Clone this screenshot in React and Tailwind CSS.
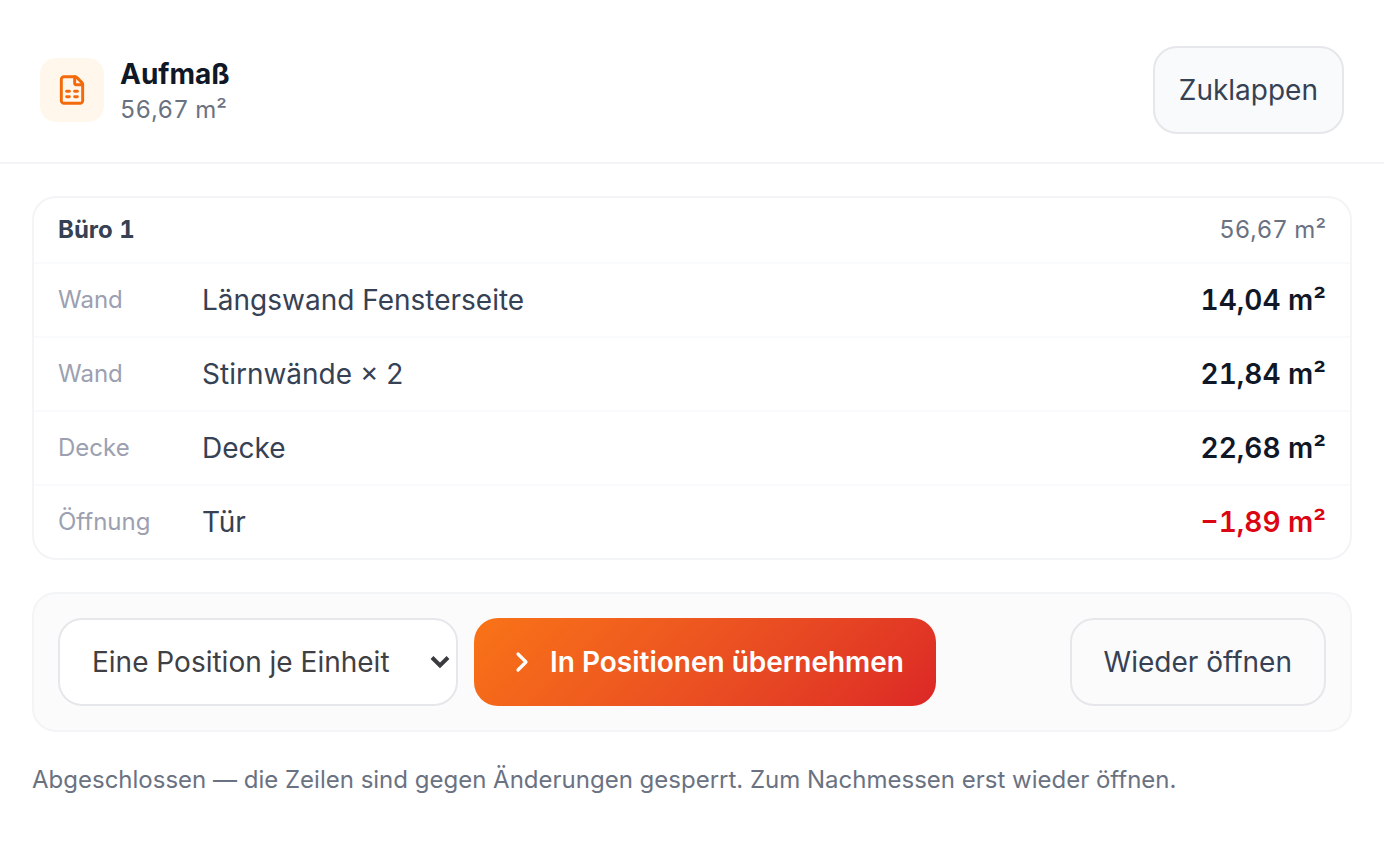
import { ChevronRight, FileSpreadsheet } from "lucide-react";

const rows = [
  { kind: "Wand", name: "Längswand Fensterseite", area: "14,04 m²" },
  { kind: "Wand", name: "Stirnwände × 2", area: "21,84 m²" },
  { kind: "Decke", name: "Decke", area: "22,68 m²" },
  { kind: "Öffnung", name: "Tür", area: "−1,89 m²", deduction: true },
];

function Header() {
  return (
    <header className="flex items-center gap-4 border-b-2 border-gray-100 px-10 pt-[46px] pb-7">
      <span className="flex size-16 shrink-0 items-center justify-center rounded-2xl bg-[#fff7eb] text-[#f26a0a]">
        <FileSpreadsheet className="size-8" strokeWidth={2.2} aria-hidden="true" />
      </span>
      <div className="min-w-0 flex-1">
        <h1 className="text-[28px] leading-10 font-bold text-gray-900">Aufmaß</h1>
        <p className="text-2xl leading-8 text-gray-500 tabular-nums">56,67 m²</p>
      </div>
      <button
        type="button"
        className="h-22 shrink-0 rounded-3xl border-2 border-gray-200 bg-gray-50 px-6 text-[28px] leading-10 text-gray-700"
      >
        Zuklappen
      </button>
    </header>
  );
}

function RoomTable() {
  return (
    <div className="overflow-hidden rounded-3xl border-2 border-gray-100">
      <table className="w-full border-separate border-spacing-0 text-left">
        <thead>
          <tr className="text-2xl leading-8">
            <th scope="col" colSpan={2} className="px-6 py-4 font-bold text-gray-700 tabular-nums">
              Büro 1
            </th>
            <th scope="col" className="px-6 py-4 text-right font-normal text-gray-500 tabular-nums">
              56,67 m²
            </th>
          </tr>
        </thead>
        <tbody>
          {rows.map((row) => (
            <tr key={row.name} className="text-[28px] leading-10">
              <td className="w-42 border-t-2 border-gray-50 py-4 pl-6 text-2xl leading-8 text-[#9ca0b0]">
                {row.kind}
              </td>
              <td className="border-t-2 border-gray-50 py-4 text-gray-700">{row.name}</td>
              <td
                className={
                  row.deduction
                    ? "border-t-2 border-gray-50 px-6 py-4 text-right font-semibold text-[#dc0612] tabular-nums"
                    : "border-t-2 border-gray-50 px-6 py-4 text-right font-semibold text-gray-900 tabular-nums"
                }
              >
                {row.area}
              </td>
            </tr>
          ))}
        </tbody>
      </table>
    </div>
  );
}

function Actions() {
  return (
    <div className="flex flex-wrap items-center gap-4 rounded-3xl border-2 border-gray-100 bg-[#fbfbfb] p-6">
      <div className="relative">
        <select
          aria-label="Übernahme"
          defaultValue="unit"
          className="h-22 w-100 appearance-none rounded-3xl border-2 border-gray-200 bg-white pr-12 pl-8 text-[28px] leading-10 text-[#3f4044]"
        >
          <option value="unit">Eine Position je Einheit</option>
        </select>
        <svg
          viewBox="0 0 20 14"
          className="pointer-events-none absolute top-[37px] right-2 h-3.5 w-5 text-[#3a3b3f]"
          fill="none"
          stroke="currentColor"
          strokeWidth="4"
          aria-hidden="true"
        >
          <path d="M2 2.5 10 10.5 18 2.5" />
        </svg>
      </div>
      <button
        type="button"
        className="flex h-22 items-center gap-3 rounded-3xl bg-linear-135 from-[#f97316] to-[#dc2626] px-8 text-[28px] leading-10 font-semibold text-white"
      >
        <ChevronRight className="size-8" strokeWidth={2.4} aria-hidden="true" />
        In Positionen übernehmen
      </button>
      <button
        type="button"
        className="ml-auto h-22 rounded-3xl border-2 border-gray-200 px-8 text-[28px] leading-10 text-gray-700"
      >
        Wieder öffnen
      </button>
    </div>
  );
}

export default function App() {
  return (
    <div className="min-h-screen bg-white font-['Inter',sans-serif] text-gray-900">
      <Header />
      <main className="flex flex-col gap-8 p-8">
        <RoomTable />
        <Actions />
        <p className="text-2xl leading-8 text-gray-500">
          Abgeschlossen — die Zeilen sind gegen Änderungen gesperrt. Zum Nachmessen erst wieder öffnen.
        </p>
      </main>
    </div>
  );
}
